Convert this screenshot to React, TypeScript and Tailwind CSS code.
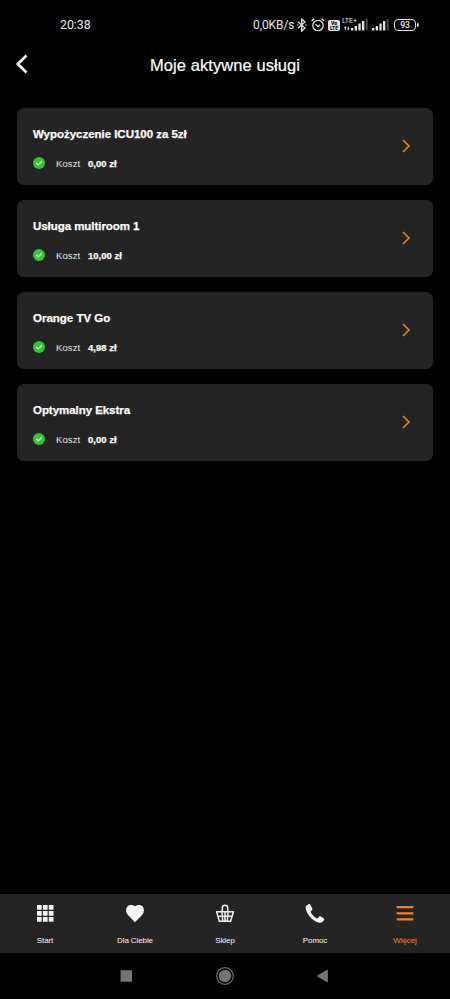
import type { ReactNode } from "react"
import clsx from "clsx"

type Service = {
  name: string
  cost: string
  nameClass?: string
}

const services: Service[] = [
  { name: "Wypożyczenie ICU100 za 5zł", cost: "0,00 zł", nameClass: "tracking-[-0.03px]" },
  { name: "Usługa multiroom 1", cost: "10,00 zł", nameClass: "tracking-[-0.05px]" },
  { name: "Orange TV Go", cost: "4,98 zł" },
  { name: "Optymalny Ekstra", cost: "0,00 zł", nameClass: "tracking-[-0.05px]" },
]

function SignalIcon() {
  return (
    <svg width="18" height="12" viewBox="0 0 18 12" fill="#e4e4e4">
      <rect x="0" y="9" width="2.3" height="2.5" />
      <rect x="3.7" y="7" width="2.3" height="4.5" />
      <rect x="7.4" y="4.5" width="2.3" height="7" />
      <rect x="11" y="2" width="2.3" height="9.5" />
      <rect x="14.7" y="0" width="2" height="11.5" fill="#4a4a4a" />
    </svg>
  )
}

function StatusBar() {
  return (
    <div className="flex h-[44px] items-start pt-[15px] pl-[60px] font-[Roboto,sans-serif] text-[#e8e8e8]">
      <span className="h-5 w-[193px] text-[12.3px] leading-[21px]">20:38</span>
      <span className="h-5 w-[44px] whitespace-nowrap text-[12px] leading-[21px] tracking-[-0.08px]">0,0KB/s</span>
      <svg className="mt-[3px]" width="10" height="14" viewBox="0 0 10 14" fill="none" stroke="#e4e4e4" strokeWidth="1.3">
        <path d="M1 4l7 6-3.3 3V1L8 4l-7 6" />
        <path d="M.3 7h1M8.5 7h1" />
      </svg>
      <svg className="mt-[3px] ml-1" width="14" height="14" viewBox="0 0 14 14" fill="none" stroke="#e4e4e4" strokeWidth="1.3">
        <circle cx="7" cy="7.5" r="5.2" />
        <path d="M.7 3.1L3.4.8M13.3 3.1L10.6.8M4.5 6.2L7 8.5l2.2-1.6" />
      </svg>
      <div className="mt-[5px] ml-[3px] flex h-[11px] w-[12px] flex-col items-center justify-center rounded-[2px] bg-[#e4e4e4] text-[5px] leading-[5px] font-black text-black">
        <span>Vo</span>
        <span>LTE</span>
      </div>
      <div className="ml-[2px] flex h-5 w-[9px] flex-col">
        <span className="mt-[2px] h-[7px] text-[7px] leading-[8px] whitespace-nowrap">LTE+</span>
        <svg className="mt-[2px] ml-[2px]" width="6" height="5" viewBox="0 0 6 5" fill="#e4e4e4">
          <path d="M0 2l1.3-2 1.3 2h-.8v2h-1V2zM3 2.5h.8v-2h1v2h.8L4.3 4.5z" />
        </svg>
      </div>
      <div className="mt-[4px] w-[21px]"><SignalIcon /></div>
      <div className="mt-[4px] w-[22px]"><SignalIcon /></div>
      <div className="mt-[4px] flex items-center">
        <span className="flex h-[12px] w-[22px] items-center justify-center rounded-[4px] border border-[#e4e4e4] text-[8.5px] leading-none font-medium">93</span>
        <span className="ml-px h-[4px] w-[2px] rounded-r bg-[#e4e4e4]" />
      </div>
    </div>
  )
}

function ServiceCard({ service }: { service: Service }) {
  return (
    <div className="flex h-[77px] items-center justify-between rounded-[7px] bg-[#242424] pr-[22px] pl-4">
      <div className="h-full pt-[18px]">
        <h2 className={clsx("h-4 whitespace-nowrap text-[11.5px] leading-4 font-bold [-webkit-text-stroke:0.25px_#fff]", service.nameClass)}>
          {service.name}
        </h2>
        <div className="mt-[15px] flex h-3 items-center whitespace-nowrap text-[9.5px] leading-3">
          <svg width="12" height="12" viewBox="0 0 12 12">
            <circle cx="6" cy="6" r="6" fill="#32c832" />
            <path d="M3.4 6l1.9 1.8 3.4-3.5" fill="none" stroke="#fff" strokeWidth="1.2" />
          </svg>
          <span className="mt-px ml-[11px] w-8 tracking-[0.1px] text-[#e6e6e6]">Koszt</span>
          <span className="mt-px font-bold [-webkit-text-stroke:0.25px_#fff]">{service.cost}</span>
        </div>
      </div>
      <svg className="mb-px" width="10" height="14" viewBox="0 0 10 14" fill="none" stroke="#f58220" strokeWidth="1.6">
        <path d="M2 1l6 6-6 6" />
      </svg>
    </div>
  )
}

function NavItem({ label, active, children }: { label: string; active?: boolean; children: ReactNode }) {
  return (
    <div className={clsx("flex flex-1 flex-col items-center pt-[9px]", active ? "text-[#f58220]" : "text-[#f4f4f4]")}>
      <svg width="22" height="22" viewBox="0 0 22 22" fill="currentColor">
        {children}
      </svg>
      <span className="mt-[10px] h-[11px] text-[8px] leading-[11px] tracking-[-0.1px] whitespace-nowrap">{label}</span>
    </div>
  )
}

export default function App() {
  return (
    <div className="flex h-[999px] w-[450px] flex-col overflow-hidden bg-black font-['Liberation_Sans',Arial,sans-serif] text-white">
      <StatusBar />

      {/* Header */}
      <header className="flex h-[42px] items-center px-[15px]">
        <svg className="mb-[2px]" width="14" height="20" viewBox="0 0 14 20" fill="none" stroke="#fff" strokeWidth="2.6">
          <path d="M11.500 1.500L2.800 10l8.700 8.500" />
        </svg>
        <h1 className="flex-1 pr-[14px] text-center text-[16.5px] leading-6 tracking-[0.08px] [-webkit-text-stroke:0.2px_#fff]">
          Moje aktywne usługi
        </h1>
      </header>

      {/* Active services */}
      <main className="flex flex-1 flex-col gap-[15px] px-[17px] pt-[22px]">
        {services.map((service) => (
          <ServiceCard key={service.name} service={service} />
        ))}
      </main>

      {/* Bottom navigation */}
      <nav className="flex h-[59px] bg-[#242424]">
        <NavItem label="Start">
          <path d="M3 2h4.7v4.7H3zM8.900 2h4.700v4.700H8.900zM14.800 2h4.700v4.700h-4.700zM3 8h4.700v4.700H3zM8.900 8h4.700v4.700H8.900zM14.800 8h4.700v4.700h-4.700zM3 14h4.700v4.700H3zM8.900 14h4.700v4.700H8.900zM14.800 14h4.700v4.700h-4.700z" />
        </NavItem>
        <NavItem label="Dla Ciebie">
          <path d="M11 19.200L3.700 11.700C1.500 9.200 1.800 5.300 3.400 3.500 5.600 1.300 9.300 1.700 11 3.500c1.700-1.800 5.400-2.200 7.600 0 1.600 1.800 1.900 5.700-.3 8.200z" />
        </NavItem>
        <NavItem label="Sklep">
          <g fill="none" stroke="currentColor" strokeWidth="1.500" strokeLinejoin="round">
            <path d="M2.600 8.800h16.800L16.600 18.200H5.400zM4 13.300h14M8 9l.7 9M14 9l-.7 9M11 9v9" />
            <path d="M8.300 8.800V5a2.700 2.700 0 0 1 5.400 0v3.800" />
          </g>
        </NavItem>
        <NavItem label="Pomoc">
          <path d="M4.600 1.300L2.300 2.800c-.9.700-.8 2.700-.2 4.500C4.100 12.700 8.800 17.700 14.200 19.600c1.700.5 3.200.3 4.100-.5l1.700-1.800c.5-.7.4-1.300-.2-1.800l-2.900-1.900c-.7-.4-1.400-.3-1.900.2l-1.200 1.400c-.4.300-.9.300-1.400 0C9.900 13.700 7.900 11.600 6.800 9.200c-.2-.5-.2-.9.200-1.300L8 6.900c.5-.5.500-1.100.2-1.700L6.500 1.900c-.4-.8-1.200-1-1.900-.6z" />
        </NavItem>
        <NavItem label="Więcej" active>
          <path d="M2.600 3h16.800v2.200H2.600zM2.600 9.200h16.800v2.200H2.600zM2.600 15.200h16.800v2.200H2.600z" />
        </NavItem>
      </nav>

      {/* System navigation */}
      <div className="flex h-[46px] items-center justify-center gap-[78px] text-[#747474]">
        <svg width="20" height="20" viewBox="0 0 20 20" fill="currentColor">
          <path d="M3.600 4.200h11.500v11.500H3.600z" />
        </svg>
        <svg width="20" height="20" viewBox="0 0 20 20" fill="currentColor">
          <circle cx="10" cy="10" r="6.200" />
          <circle cx="10" cy="10" r="8.300" fill="none" stroke="currentColor" strokeWidth="1.200" />
        </svg>
        <svg width="20" height="20" viewBox="0 0 20 20" fill="currentColor">
          <path d="M14.800 3.500v13L3.600 10z" />
        </svg>
      </div>
    </div>
  )
}
